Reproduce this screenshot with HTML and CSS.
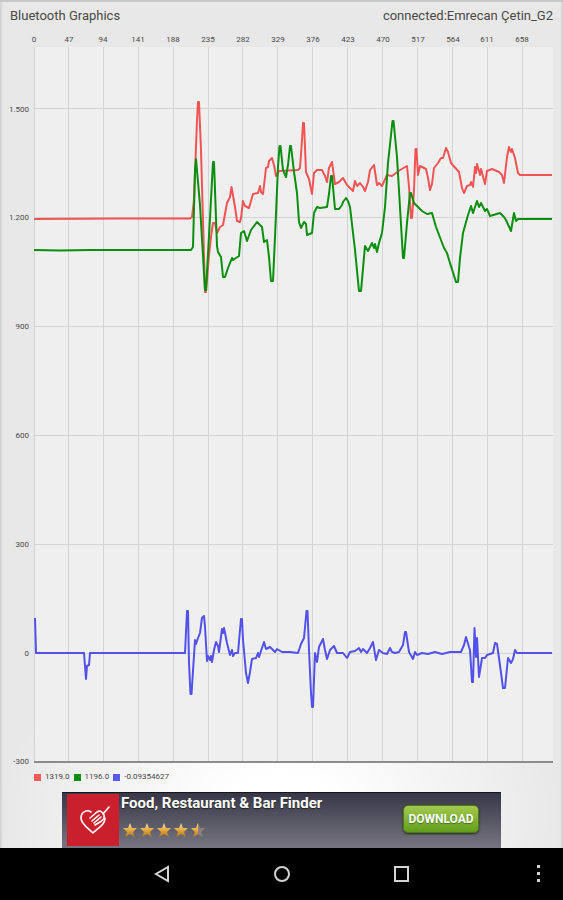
FILE: index.html
```
<!DOCTYPE html>
<html lang="en">
    <head>
        <title>Bluetooth Graphics</title>
        <meta charset="utf-8" />
        <meta name="viewport" content="width=device-width, initial-scale=1.0">
        <link rel="stylesheet" href="styles.css">
    </head>
    <body>
        <main class="app">
            <header class="app-header">
                <span>Bluetooth Graphics</span>
                <span>connected:Emrecan Çetin_G2</span>
            </header>

            <svg class="chart" viewBox="0 30 563 736" role="img" aria-label="Sensor readings">
                <rect class="plot" x="34" y="47" width="519" height="715" />
                <path class="grid" d="M34.5 47V762M68.5 47V762M103.5 47V762M138.5 47V762M173.5 47V762M208.5 47V762M242.5 47V762M277.5 47V762M312.5 47V762M347.5 47V762M382.5 47V762M417.5 47V762M452.5 47V762M487.5 47V762M522.5 47V762M34 108.5H553M34 217.5H553M34 326.5H553M34 435.5H553M34 544.5H553M34 653.5H553" />
                <path class="axis" d="M34 762H553" />
                <g class="x-labels">
                    <text x="34" y="42">0</text>
                    <text x="69" y="42">47</text>
                    <text x="103" y="42">94</text>
                    <text x="138" y="42">141</text>
                    <text x="173" y="42">188</text>
                    <text x="208" y="42">235</text>
                    <text x="243" y="42">282</text>
                    <text x="278" y="42">329</text>
                    <text x="313" y="42">376</text>
                    <text x="348" y="42">423</text>
                    <text x="383" y="42">470</text>
                    <text x="418" y="42">517</text>
                    <text x="453" y="42">564</text>
                    <text x="487" y="42">611</text>
                    <text x="522" y="42">658</text>
                </g>
                <g class="y-labels">
                    <text x="29" y="112">1.500</text>
                    <text x="29" y="220">1.200</text>
                    <text x="29" y="329">900</text>
                    <text x="29" y="438">600</text>
                    <text x="29" y="547">300</text>
                    <text x="29" y="656">0</text>
                    <text x="29" y="764">-300</text>
                </g>
                <polyline class="line red" points="34,219 120,218.5 190,218.5 192,217 194,200 197,120 198,102 199,102 201,150 205,292 206,292 209,255 211.5,233 213,223 215,223 217,233 220,227 223,225 227,203 230,197 231.5,187 235,207 237,221 240,222 241,218 243,201 245,206 249,208 253,194 258,193 260,186 261,192 263,194 266,168 268,167 269,161 272,158 274,165 276,176 279,171 298,170 300,168 302,140 303,123 304,123 306,172 309,179 312,194 314,173 317,170 322,170 325,176 327,182 329,168 332,162 335,184 339,182 343,178 347,185 350,188 353,191 355,181 357,186 360,183 363,187 365,191 368,182 370,170 374,165 377,185 379,183 382,186 387,175 392,176 400,170 407,166 409,187 411,218 412,218 414,190 415.5,149 416.5,149 418,175 420,166 426,169 428,178 430,190 432,184 434,168 438,163 441,158 443,158 446,148 448,152 451,163 459,172 462,188 464,193 467,186 470,185 471,182 473,187 475,167 476,173 477,164 480,175 481,169 485,184 487,171 492,169 499,172 502,175 504,183 507,157 509,147 511,152 512,149 515,158 518,173 520,175 552,175" />
                <polyline class="line green" points="34,250 60,250.5 90,250 191,250 193,247 195,170 196,159 200,205 205,290 206,290 210,218 213,162 214,162 217,246 218,252 221,257 223,277 225,277 228,268 232,258 233,260 239,256 241,233 244,231 247,241 251,230 257,222 262,227 264,242 267,240 269,257 271,281 273,281 275,237 278,167 279.5,146 280.5,146 283,170 286,177 288,165 290,146 291,146 294,172 297,193 299,222 301,228 304,222 306,224 307,235 312,233 314,213 317,207 320,208 327,207 329,194 331,176 332,176 335,209 339,209 342,205 343,202 346,198 348,201 350,207 355,250 359,291 361,291 365,246 368,251 372,243 374,248 375,244 377,252 379,243 382,233 385,207 388,163 392.5,121 393.5,121 397,157 403,258 404,258 407,223 410,193 411,193 414,203 422,211 427,214 432,213 436,227 444,248 447,253 450,263 456,282 458,282 460,258 463,233 468,215 471,206 473,213 475,207 477,201 479,207 481,203 485,211 487,209 490,216 500,213 504,217 506,220 511,231 514,213 516,221 518,219 552,219" />
                <polyline class="line blue" points="35,618 36,653 84,653 86,679 87,666 89,665 90,653 185,653 187,611 188,611 189,663 190.5,694 191.5,694 195,640 196,644 198,638 200,633 202,618 204,616 205,627 207,661 208,656 210,660 211,656 212,662 214,650 216,642 218,646 219,652 222,629 223,633 224,628 227,643 230,655 232,650 233,656 235,653 238,653 240,630 241,619 242,619 243,640 246,673 248,683 250,672 252,659 256,658 258,653 259,657 264,642 266,649 270,647 275,652 277,649 282,652 290,652 298,653 301,644 304,638 306.5,611 307.5,611 309,650 311,693 312,707 313,707 315,653 317,662 319,647 323,639 325,650 327,659 330,650 334,646 337,653 343,653 347,658 350,652 355,651 359,648 361,652 363,649 367,653 370,648 373,642 376,660 379,650 383,653 387,654 390,648 392,652 395,653 399,652 403,645 405,632 406,632 409,652 413,659 415,652 417,655 422,653 428,654 435,652 442,654 450,652 461,652 464,645 466,637 469,647 470,650 472,682 473,682 474.5,628 476,657 477,638 479,677 482,658 485,658 487,655 493,653 495,643 497,644 499,658 503,688 505,688 508,658 511,663 513,659 515,650 517,653 552,653" />
            </svg>

            <ul class="legend">
                <li><span class="swatch swatch-red"></span>1319.0</li>
                <li><span class="swatch swatch-green"></span>1196.0</li>
                <li><span class="swatch swatch-blue"></span>-0.09354627</li>
            </ul>

            <aside class="ad">
                <svg class="ad-logo" viewBox="0 0 52 52" aria-hidden="true">
                    <rect width="52" height="52" fill="#ca202d" />
                    <g fill="none" stroke="#fff" stroke-width="1.6" stroke-linecap="round" stroke-linejoin="round">
                        <path d="M24 18C20 15 14 18 14 24C14 30 21 34 26 39C31 34 38 31 38 24" />
                        <path d="M42 13L36 20" />
                        <path d="M23 24L30 18C33 16 36 18 37 21C38 25 35 27 33 28L28 31" />
                        <path d="M25 27L32 21M27 29L34 23" />
                    </g>
                </svg>
                <div class="ad-info">
                    <strong>Food, Restaurant &amp; Bar Finder</strong>
                    <svg class="stars" viewBox="0 0 84 16" role="img" aria-label="4.5 out of 5 stars">
                        <defs>
                            <linearGradient id="gold" x2="0" y2="1">
                                <stop offset="0" stop-color="#f5dda0" />
                                <stop offset="0.5" stop-color="#e5aa42" />
                                <stop offset="1" stop-color="#b27618" />
                            </linearGradient>
                            <path id="star" d="M8 1L10 6L15 6L11 10L13 15L8 12L3 15L5 10L1 6L6 6Z" />
                        </defs>
                        <g fill="url(#gold)">
                            <use href="#star" />
                            <use href="#star" x="17" />
                            <use href="#star" x="34" />
                            <use href="#star" x="51" />
                            <use href="#star" x="68" fill="#8a8079" />
                            <path d="M76 1V12L71 15L73 10L69 6L74 6Z" />
                        </g>
                        <path d="M76 1L78 6H83L79 10L81 15L76 12Z" fill="#8a8079" />
                    </svg>
                </div>
                <button type="button" class="download">DOWNLOAD</button>
            </aside>
        </main>

        <nav class="nav-bar">
            <span></span>
            <button type="button" aria-label="Back">
                <svg viewBox="0 0 20 20"><path d="M16 3V17L4 10Z" /></svg>
            </button>
            <button type="button" aria-label="Home">
                <svg viewBox="0 0 20 20"><circle cx="10" cy="10" r="7" /></svg>
            </button>
            <button type="button" aria-label="Recent apps">
                <svg viewBox="0 0 20 20"><rect x="3" y="3" width="13" height="14" /></svg>
            </button>
            <button type="button" class="more" aria-label="More">
                <svg viewBox="0 0 20 20"><path d="M9 1h3v3H9zM9 8h3v3H9zM9 15h3v3H9z" /></svg>
            </button>
        </nav>
    </body>
</html>
```
FILE: styles.css
```
* {
    box-sizing: border-box;
}

body {
    display: flex;
    flex-direction: column;
    min-height: 100vh;
    margin: 0;
    background: #000;
    font-family: Roboto, sans-serif;
    color: #484848;
}

.app {
    display: flex;
    flex: 1;
    flex-direction: column;
    border-top: 2px solid #c8c8c8;
    background:
        linear-gradient(to right, #cfcfcf, transparent 3px, transparent calc(100% - 3px), #cfcfcf),
        radial-gradient(ellipse 50% 24% at 50% 96%, #fff 20%, transparent),
        #e8e8e8;
}

.app-header {
    display: flex;
    justify-content: space-between;
    height: 28px;
    padding: 0 10px;
    font-size: 13px;
    line-height: 28px;
}

.chart {
    display: block;
    width: 100%;
}

.plot {
    fill: #efefef;
}

.grid {
    fill: none;
    stroke: #d3d3d3;
}

.axis {
    stroke: #8c8c8c;
    stroke-width: 2;
}

.x-labels,
.y-labels {
    fill: #484848;
    font-size: 8px;
    text-anchor: middle;
}

.y-labels {
    text-anchor: end;
}

.line {
    fill: none;
    stroke-width: 2;
    stroke-linejoin: round;
}

.red {
    stroke: #f05454;
}

.green {
    stroke: #098f0d;
}

.blue {
    stroke: #5252eb;
}

.legend {
    display: flex;
    gap: 4px;
    height: 26px;
    margin: 0;
    padding: 5px 34px;
    list-style: none;
    font-size: 8px;
    line-height: 10px;
}

.legend li {
    display: flex;
    align-items: center;
    height: 12px;
    gap: 4px;
}

.swatch {
    width: 7px;
    height: 7px;
}

.swatch-red {
    background: #f55a5a;
}

.swatch-green {
    background: #098f0d;
}

.swatch-blue {
    background: #5a5af0;
}

.ad {
    display: flex;
    width: 78%;
    height: 56px;
    margin: 0 auto;
    padding: 1px 22px 2px 5px;
    border-top: 1px solid #16161e;
    background: linear-gradient(#383746, #777581);
}

.ad-logo {
    width: 52px;
    height: 52px;
}

.ad-info {
    flex: 1;
    padding-left: 2px;
    color: #fff;
    font-size: 15px;
    line-height: 18px;
    white-space: nowrap;
}

.ad-info strong {
    display: block;
    text-shadow: 0 1px 1px #222;
}

.stars {
    display: block;
    width: 84px;
    height: 16px;
    margin-top: 10px;
    margin-left: 1px;
}

.download {
    width: 76px;
    height: 28px;
    margin-top: 11px;
    padding: 0;
    border: 1px solid #4e7a16;
    border-radius: 5px;
    background: linear-gradient(#a2c94f, #639e1c);
    box-shadow: 0 1px 2px #23291c;
    color: #fff;
    font: bold 12px Roboto, sans-serif;
    text-shadow: 0 1px 1px #456a18;
}

.nav-bar {
    display: grid;
    grid-template-columns: 1fr 120px 120px 120px 1fr;
    align-items: center;
    height: 52px;
    background: #000;
}

.nav-bar button {
    display: flex;
    justify-content: center;
    padding: 0;
    border: 0;
    background: none;
}

.nav-bar svg {
    width: 20px;
    height: 20px;
    fill: none;
    stroke: #d4d4d4;
    stroke-width: 2;
}

.nav-bar .more {
    justify-content: flex-end;
    padding-right: 15px;
}

.nav-bar .more svg {
    fill: #d4d4d4;
    stroke: none;
}
```
